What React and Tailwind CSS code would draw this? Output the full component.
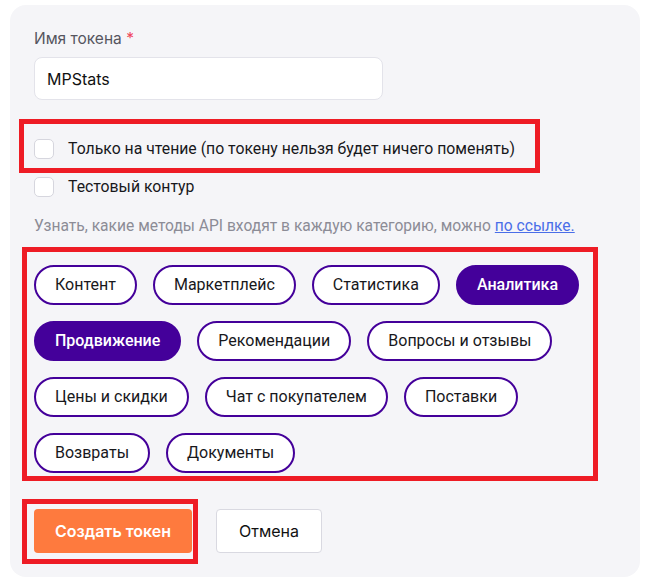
const categories = [
    { name: 'Контент', active: false },
    { name: 'Маркетплейс', active: false },
    { name: 'Статистика', active: false },
    { name: 'Аналитика', active: true },
    { name: 'Продвижение', active: true },
    { name: 'Рекомендации', active: false },
    { name: 'Вопросы и отзывы', active: false },
    { name: 'Цены и скидки', active: false },
    { name: 'Чат с покупателем', active: false },
    { name: 'Поставки', active: false },
    { name: 'Возвраты', active: false },
    { name: 'Документы', active: false },
];

const inter = "font-['Inter','Liberation_Sans',sans-serif]";
const roboto = "font-['Roboto','Liberation_Sans',sans-serif]";

export default function App() {
    return (
        <div className="min-h-[582px] bg-white pl-[10px] pt-[5px]">
            <div className="relative w-[630px] rounded-[16px] bg-[#f5f5f8] px-[24px] pt-[24px] pb-[24px]">
                {/* token name */}
                <label className={`${inter} block text-[15.5px] leading-[20px] text-[#55555f]`}>
                    Имя токена <span className="text-[#f0455a]">*</span>
                </label>
                <div className="mt-[8px] flex h-[43px] w-[349px] items-center rounded-[8px] border border-[#e3e3ea] bg-white px-[12px]">
                    <span className={`${inter} text-[16px] text-[#111]`}>MPStats</span>
                </div>

                {/* checkboxes */}
                <div className={`${roboto} mt-[39px] flex items-center gap-[14px]`}>
                    <span className="h-[20px] w-[20px] rounded-[5px] border border-[#d6d6de] bg-white"></span>
                    <span className="text-[15.8px] leading-[20px] text-[#18181c]">Только на чтение (по токену нельзя будет ничего поменять)</span>
                </div>
                <div className={`${roboto} mt-[18px] flex items-center gap-[14px]`}>
                    <span className="h-[20px] w-[20px] rounded-[5px] border border-[#d6d6de] bg-white"></span>
                    <span className="text-[15.8px] leading-[20px] text-[#18181c]">Тестовый контур</span>
                </div>

                <p className={`${roboto} mt-[19px] text-[15.6px] leading-[20px] text-[#8c8c96]`}>
                    Узнать, какие методы API входят в каждую категорию, можно{' '}
                    <a className="text-[#4a6ee8] underline">по ссылке.</a>
                </p>

                {/* categories */}
                <div className="mt-[29px] flex w-[560px] flex-wrap gap-x-[16px] gap-y-[16px]">
                    {categories.map(c => (
                        <span
                            key={c.name}
                            className={`${roboto} flex h-[40px] items-center rounded-full border-2 border-[#44009a] px-[19px] text-[16px] ${c.active ? 'bg-[#44009a] font-medium text-white' : 'bg-white text-[#18181c]'}`}
                        >
                            {c.name}
                        </span>
                    ))}
                </div>

                {/* actions */}
                <div className={`${inter} mt-[36px] flex gap-[24px]`}>
                    <button className="h-[44px] w-[158px] rounded-[4px] bg-[#fe7a3e] text-[16px] font-semibold text-white">
                        Создать токен
                    </button>
                    <button className="h-[44px] w-[106px] rounded-[4px] border border-[#d9d9e1] bg-white text-[16px] text-[#111]">
                        Отмена
                    </button>
                </div>

                {/* annotation frames */}
                <div className="pointer-events-none absolute left-[9px] top-[114px] h-[54px] w-[521px] border-[5px] border-[#ee1c25]"></div>
                <div className="pointer-events-none absolute left-[12px] top-[242px] h-[234px] w-[576px] border-[5px] border-[#ee1c25]"></div>
                <div className="pointer-events-none absolute left-[12px] top-[494px] h-[65px] w-[176px] border-[5px] border-[#ee1c25]"></div>
            </div>
        </div>
    );
}
